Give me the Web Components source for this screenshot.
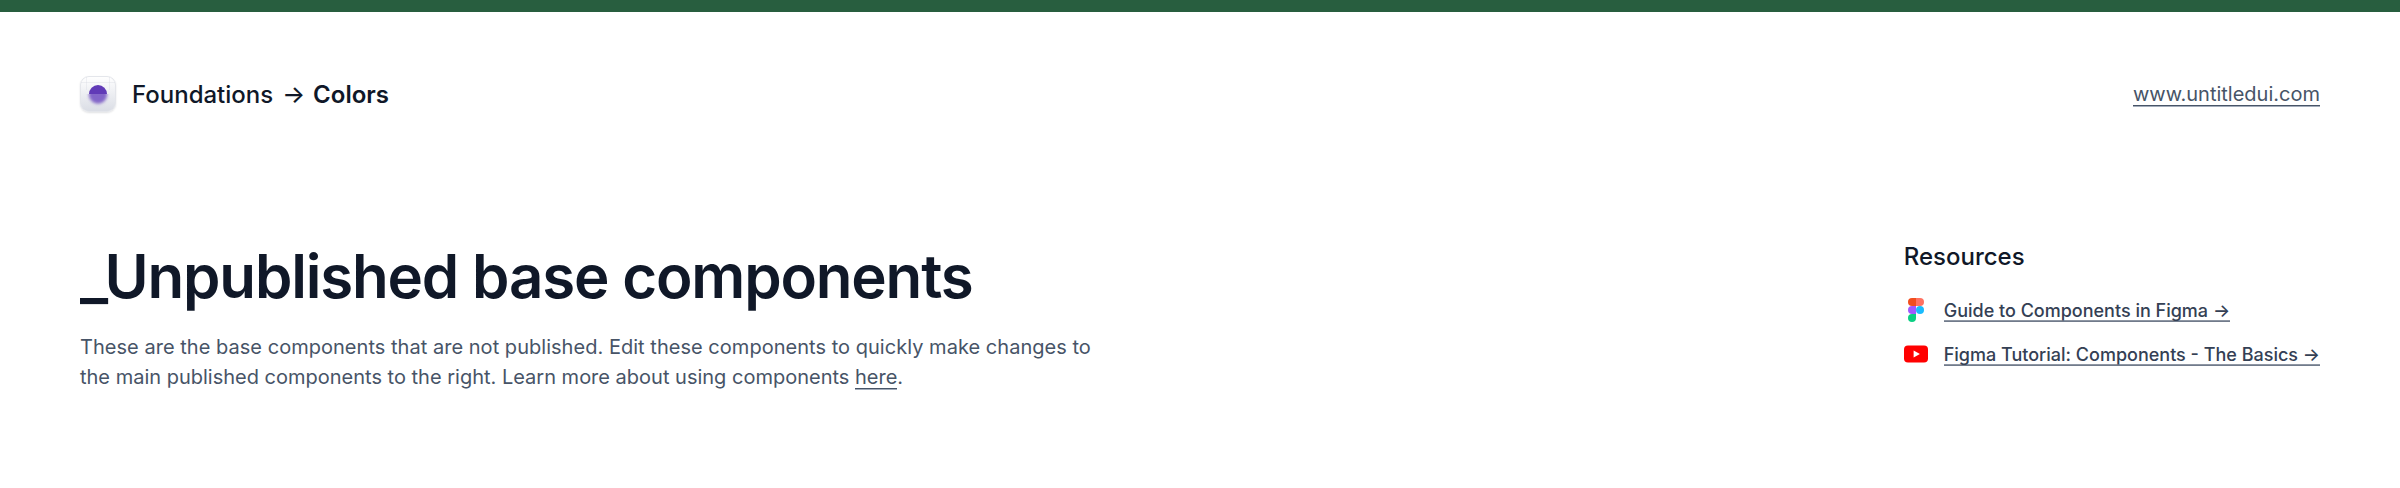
<!DOCTYPE html>
<html lang="en"><head><meta charset="utf-8"><title>Colors</title>
<style>body{margin:0;background:#fff;font-family:Inter,sans-serif;color:#101828}</style></head>
<body><doc-page></doc-page>
<script>
const def=(n,h)=>customElements.define(n,class extends HTMLElement{constructor(){super();this.attachShadow({mode:'open'}).innerHTML=h;}});
def('brand-mark',`<style>:host{display:block;width:36px;height:36px;border-radius:9px;box-shadow:0 1px 2px #10182820}svg{display:block}</style><svg width="36" height="36" viewBox="0 0 36 36"><defs><linearGradient id="g" x2="0" y2="1"><stop stop-color="#fff"/><stop offset="1" stop-color="#dadde5"/></linearGradient><filter id="b" x="-50%" y="-50%" width="200%" height="200%"><feGaussianBlur stdDeviation="1.7"/></filter><clipPath id="top"><path d="M0 0h36v18H0z"/></clipPath><clipPath id="low"><path d="M0 18h36v18H0z"/></clipPath></defs>
<rect x=".5" y=".5" width="35" height="35" rx="8.5" fill="url(#g)" stroke="#e4e6eb"/><path d="M6.5 1v13M29.5 1v13M1 6.5h34" stroke="#d0d5dd" stroke-opacity=".3" fill="none"/><circle cx="18" cy="18" r="9" fill="#613bb7" clip-path="url(#top)"/><g clip-path="url(#low)"><circle cx="18" cy="18.6" r="9.2" fill="#7250c2" fill-opacity=".85" filter="url(#b)"/></g></svg>`);
def('text-link',`<style>:host{display:inline;padding-bottom:1px;background:linear-gradient(var(--line-top,currentColor),var(--line-top,currentColor)) 0 calc(100% - 1px)/100% 1px no-repeat,linear-gradient(var(--line-bottom,#a3acba),var(--line-bottom,#a3acba)) 0 100%/100% 1px no-repeat}</style><slot></slot>`);
def('resource-item',`<style>:host{display:flex;align-items:center;gap:16px;height:24px;font:500 18px/24px Inter,sans-serif;color:#344054;white-space:nowrap}text-link{--line-top:#8e96a3;--line-bottom:#717b8b}::slotted(svg){display:block}span{margin-top:1px}</style><slot name="icon"></slot><span><text-link><slot></slot></text-link></span>`);
def('page-header',`<style>:host{display:flex;justify-content:space-between;align-items:center;height:36px}nav{display:flex;align-items:center;font:500 24px/36px Inter,sans-serif}brand-mark{margin-right:16px}span{padding-top:1px}.arrow{margin:0 8px 0 9px}b{font-weight:600}.url{font:400 20px/28px Inter,sans-serif;color:#475467;padding:0}</style><nav><brand-mark></brand-mark><span>Foundations</span><span class="arrow">→</span><span><b>Colors</b></span></nav><span class="url"><text-link>www.untitledui.com</text-link></span>`);
def('doc-page',`<style>:host{display:block;box-sizing:border-box;height:488px;border-top:12px solid #285e3f;padding:64px 80px 0}
main{display:flex;justify-content:space-between;padding-top:128px}
h1{margin:0;font:600 60px/72px Inter,sans-serif;letter-spacing:-1.18px;white-space:nowrap}p{margin:20px 0 0;font:400 20px/30px Inter,sans-serif;color:#475467;white-space:nowrap}.first{letter-spacing:.03px}
h2{margin:2px 0 26px;font:500 24px/30px Inter,sans-serif}resource-item+resource-item{margin-top:20px}</style>
<page-header></page-header><main><section><h1>_Unpublished base components</h1><p><span class="first">These are the base components that are not published. Edit these components to quickly make changes to</span><br><span>the main published components to the right. Learn more about using components <text-link>here</text-link>.</span></p></section>
<aside><h2>Resources</h2><resource-item><svg slot="icon" width="24" height="24" viewBox="0 0 24 24"><path d="M8 24a4 4 0 0 0 4-4v-4H8a4 4 0 0 0 0 8" fill="#0acf83"/><path d="M4 12a4 4 0 0 1 4-4h4v8H8a4 4 0 0 1-4-4" fill="#a259ff"/><path d="M4 4a4 4 0 0 1 4-4h4v8H8a4 4 0 0 1-4-4" fill="#f24e1e"/><path d="M12 0h4a4 4 0 0 1 0 8h-4z" fill="#ff7262"/><circle cx="16" cy="12" r="4" fill="#1abcfe"/></svg>Guide to Components in Figma →</resource-item><resource-item><svg slot="icon" width="24" height="24" viewBox="0 0 24 24"><rect y="3.5" width="24" height="17" rx="4" fill="#f00"/><path d="M9.6 8.4v7.2l6.3-3.6z" fill="#fff"/></svg>Figma Tutorial: Components - The Basics →</resource-item></aside></main>`);
</script></body></html>
